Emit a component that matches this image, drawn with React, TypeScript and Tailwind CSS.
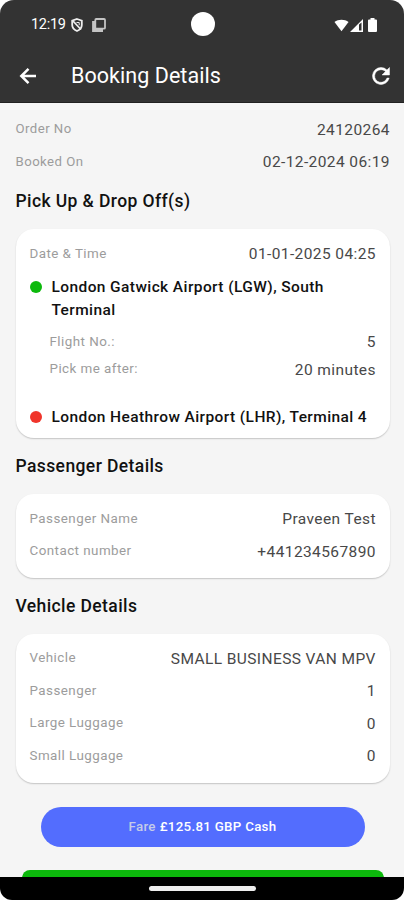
import type { ReactNode } from "react";

type RowProps = { label: string; value: string; labelClass?: string };

function Row({ label, value, labelClass = "text-[13.4px]" }: RowProps) {
  return (
    <div className="flex h-[32.5px] items-center justify-between">
      <span className={`tracking-[0.45px] text-[#9c9c9c] ${labelClass}`}>{label}</span>
      <span className="relative top-px -mr-[0.4px] text-[15.5px] tracking-[0.4px] text-[#484848]">{value}</span>
    </div>
  );
}

function Heading({ children }: { children: ReactNode }) {
  return (
    <h2 className="flex h-14 items-center pt-0.5 text-[17.5px] font-medium tracking-[0.4px] text-[#111]">{children}</h2>
  );
}

function Card({ className, children }: { className: string; children: ReactNode }) {
  return (
    <section className={`rounded-[18px] bg-white px-3.5 shadow-[0_1px_1.5px_rgba(0,0,0,0.2)] ${className}`}>
      {children}
    </section>
  );
}

function Stop({ color, children }: { color: string; children: ReactNode }) {
  return (
    <div className="flex items-start">
      <span className={`mt-[5px] mr-[10px] size-3 shrink-0 rounded-full ${color}`} />
      <p className="text-[15.5px] leading-[23px] font-medium tracking-[0.4px] text-[#111]">{children}</p>
    </div>
  );
}

function StatusBar() {
  return (
    <div className="grid h-12 grid-cols-3 items-center pr-[27px] pl-[29px]">
      <div className="ml-0.5 flex items-center pt-0.5 text-white">
        <span className="w-[35px] text-[14.5px] tracking-[-0.3px]">12:19</span>
        <svg className="ml-[5px]" width="12" height="14" viewBox="0 0 12 14" fill="none" stroke="#eee" strokeWidth="1.8">
          <path d="M6 1 10.8 2.7V7c0 3-2 4.8-4.8 6C3.2 11.8 1.2 10 1.2 7V2.7Z" />
          <path d="M1.5 2.5 10 11.5" />
          <path d="M5.5 4.5h2.7v2.7" strokeWidth="1" />
        </svg>
        <svg className="ml-[9px]" width="14" height="14" viewBox="0 0 14 14" fill="none" stroke="#c4c4c4">
          <rect x="3.3" y="1" width="9.7" height="9.7" rx="1" strokeWidth="1.8" />
          <path d="M1.6 3V12.4h9.4" strokeWidth="3" />
        </svg>
      </div>
      <span className="size-6 justify-self-center rounded-full bg-white" />
      <div className="flex items-center justify-end pt-0.5">
        <svg width="15" height="13" viewBox="0 0 16 13" fill="#fff">
          <path d="M.5 2.8C4.5-.3 11.5-.3 15.5 2.8L8 12.5Z" />
        </svg>
        <svg className="ml-px" width="13" height="13" viewBox="0 0 13 13">
          <path fill="#fff" fillRule="evenodd" d="M13 0v13H0ZM9 5.5v6H11.5V3.5Z" />
        </svg>
        <svg className="ml-[5px]" width="9" height="14" viewBox="0 0 9 14" fill="#fff">
          <path d="M2.5 0h4v1.5H8A1 1 0 0 1 9 2.5V13a1 1 0 0 1-1 1H1a1 1 0 0 1-1-1V2.5a1 1 0 0 1 1-1h1.5Z" />
        </svg>
      </div>
    </div>
  );
}

function AppBar() {
  return (
    <div className="flex h-[55px] items-center pr-[14px] pl-[19px] text-white">
      <button type="button" aria-label="Back">
        <svg width="18" height="18" viewBox="0 0 18 18" fill="none" stroke="currentColor" strokeWidth="2.5">
          <path d="M17 9H2.5M9.5 1.8 2.3 9l7.2 7.2" />
        </svg>
      </button>
      <h1 className="ml-[34px] flex-1 pt-0.5 text-[21.5px] tracking-[0.05px]">Booking Details</h1>
      <button type="button" aria-label="Refresh">
        <svg width="18" height="18" viewBox="3.5 3.5 17 17" fill="currentColor" stroke="currentColor" strokeWidth="0.5">
          <path d="M17.65 6.35A7.96 7.96 0 0 0 12 4a8 8 0 1 0 7.73 10h-2.08A6 6 0 1 1 12 6c1.66 0 3.14.69 4.22 1.78L13 11h7V4z" />
        </svg>
      </button>
    </div>
  );
}

export default function App() {
  return (
    <div className="h-[900px] w-[404px] bg-white font-[Roboto,sans-serif]">
      <div className="flex h-full flex-col overflow-hidden rounded-t-[14px] rounded-b-[12px] bg-[#f5f5f5]">
        <header className="h-[103px] shrink-0 border-b border-[#222] bg-[#333]">
          <StatusBar />
          <AppBar />
        </header>

        <main className="min-h-0 flex-1 overflow-hidden pr-[14.5px] pl-[15.5px]">
          <div className="pt-2.5">
            <Row label="Order No" value="24120264" labelClass="text-[13.2px]" />
            <Row label="Booked On" value="02-12-2024 06:19" labelClass="text-[13.2px]" />
          </div>

          <div className="-mt-[5.5px]">
            <Heading>Pick Up &amp; Drop Off(s)</Heading>
          </div>
          <Card className="h-[209px] pt-[9px]">
            <Row label="Date & Time" value="01-01-2025 04:25" />
            <div className="mt-1.5">
              <Stop color="bg-[#0cb90c]">London Gatwick Airport (LGW), South Terminal</Stop>
            </div>
            <div className="mt-[3.5px] h-[80.5px] pl-5">
              <div className="h-[27.5px]">
                <Row label="Flight No.:" value="5" />
              </div>
              <div className="h-7">
                <Row label="Pick me after:" value="20 minutes" />
              </div>
            </div>
            <Stop color="bg-[#f0352b]">London Heathrow Airport (LHR), Terminal 4</Stop>
          </Card>

          <Heading>Passenger Details</Heading>
          <Card className="h-[84px] pt-[9px]">
            <Row label="Passenger Name" value="Praveen Test" />
            <Row label="Contact number" value="+441234567890" />
          </Card>

          <Heading>Vehicle Details</Heading>
          <Card className="h-[149px] pt-[8.5px]">
            <Row label="Vehicle" value="SMALL BUSINESS VAN MPV" />
            <Row label="Passenger" value="1" />
            <Row label="Large Luggage" value="0" />
            <Row label="Small Luggage" value="0" />
          </Card>

          <button
            type="button"
            className="mx-auto mt-6 flex h-10 w-[324px] items-center justify-center gap-1 rounded-full bg-[#536dfe] text-[13.3px] font-medium tracking-[0.3px] text-white"
          >
            <span className="text-[#c5cbe8]">Fare</span>
            <span>£125.81 GBP Cash</span>
          </button>
          <div className="mx-[6px] mt-[23px] h-10 rounded-[8px] bg-[#0cb90c]" />
        </main>

        <footer className="flex h-[23px] shrink-0 justify-center bg-black pt-[9px]">
          <span className="h-[5px] w-[107px] rounded-full bg-[#eee]" />
        </footer>
      </div>
    </div>
  );
}
